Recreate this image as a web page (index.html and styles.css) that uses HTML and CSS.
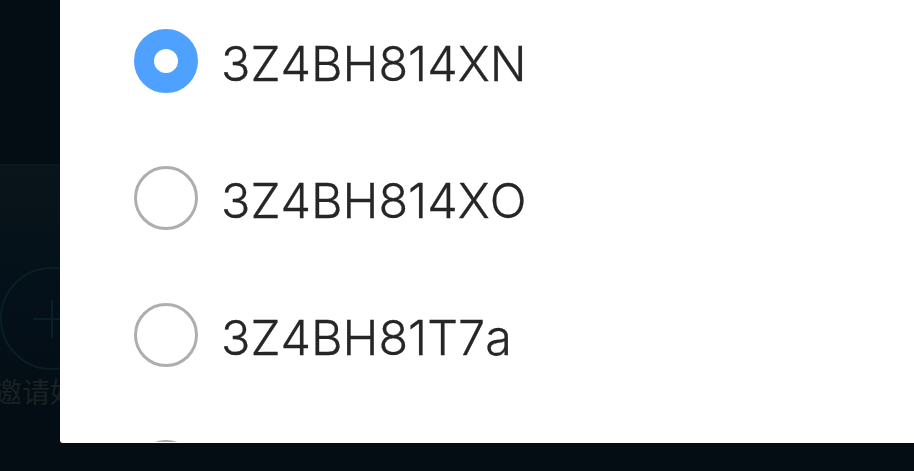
FILE: index.html
```html
<!DOCTYPE html>
<html lang="zh">
<head>
    <meta charset="UTF-8">
    <meta name="viewport" content="width=device-width, initial-scale=1.0">
    <title>Select device</title>
    <link rel="stylesheet" href="styles.css">
</head>
<body>
    <div class="backdrop">
        <div class="band">
            <div class="invite">
                <div class="invite-circle"><span class="plus"></span></div>
                <div class="invite-label">邀请好友</div>
            </div>
        </div>
    </div>

    <div class="sheet">
        <div class="option">
            <span class="radio radio-on"></span>
            <span class="option-name">3Z4BH814XN</span>
        </div>
        <div class="option">
            <span class="radio"></span>
            <span class="option-name">3Z4BH814XO</span>
        </div>
        <div class="option">
            <span class="radio"></span>
            <span class="option-name">3Z4BH81T7a</span>
        </div>
        <div class="option option-last">
            <span class="radio"></span>
        </div>
    </div>
</body>
</html>
```

FILE: styles.css
```css
html, body {
    margin: 0;
    height: 100%;
}
body {
    position: relative;
    overflow: hidden;
    background: #030d13;
    font-family: Inter, "Noto Sans CJK SC", sans-serif;
}
.backdrop {
    height: 100%;
    padding-top: 164px;
    box-sizing: border-box;
}
.band {
    height: 307px;
    padding-top: 102px;
    box-sizing: border-box;
    border-top: 1px solid #0a1a1c;
    background: linear-gradient(#091519, #04101a 45%, #030d13 80%);
}
.invite {
    width: 112px;
    margin-left: -6px;
}
.invite-circle {
    display: flex;
    align-items: center;
    justify-content: center;
    width: 103px;
    height: 103px;
    box-sizing: border-box;
    margin-left: 6px;
    border: 2px solid #0a1f1f;
    border-radius: 50%;
}
.plus {
    width: 38px;
    height: 38px;
    background:
        linear-gradient(#0a1f1f, #0a1f1f) center / 100% 2px no-repeat,
        linear-gradient(#0a1f1f, #0a1f1f) center / 2px 100% no-repeat;
}
.invite-label {
    margin-top: 5px;
    font-size: 28px;
    line-height: 36px;
    white-space: nowrap;
    color: #1a2124;
}
.sheet {
    position: absolute;
    top: 0;
    left: 60px;
    right: -20px;
    height: 443px;
    padding-top: 29px;
    box-sizing: border-box;
    overflow: hidden;
    background: #fff;
    border-radius: 0 0 0 3px;
}
.option {
    display: flex;
    align-items: center;
    gap: 23px;
    height: 64px;
    margin-bottom: 73px;
    padding-left: 74px;
}
.option-last {
    height: 2px;
    overflow: hidden;
    align-items: flex-start;
}
.radio {
    flex: none;
    width: 64px;
    height: 64px;
    box-sizing: border-box;
    border: 3px solid #aeaeae;
    border-radius: 50%;
    background: #fff;
}
.radio-on {
    border: 20px solid #4fa1ff;
}
.option-name {
    padding-top: 5px;
    font-size: 48.5px;
    font-weight: 300;
    font-kerning: none;
    -webkit-text-stroke: 0.3px #262626;
    color: #262626;
}
```
